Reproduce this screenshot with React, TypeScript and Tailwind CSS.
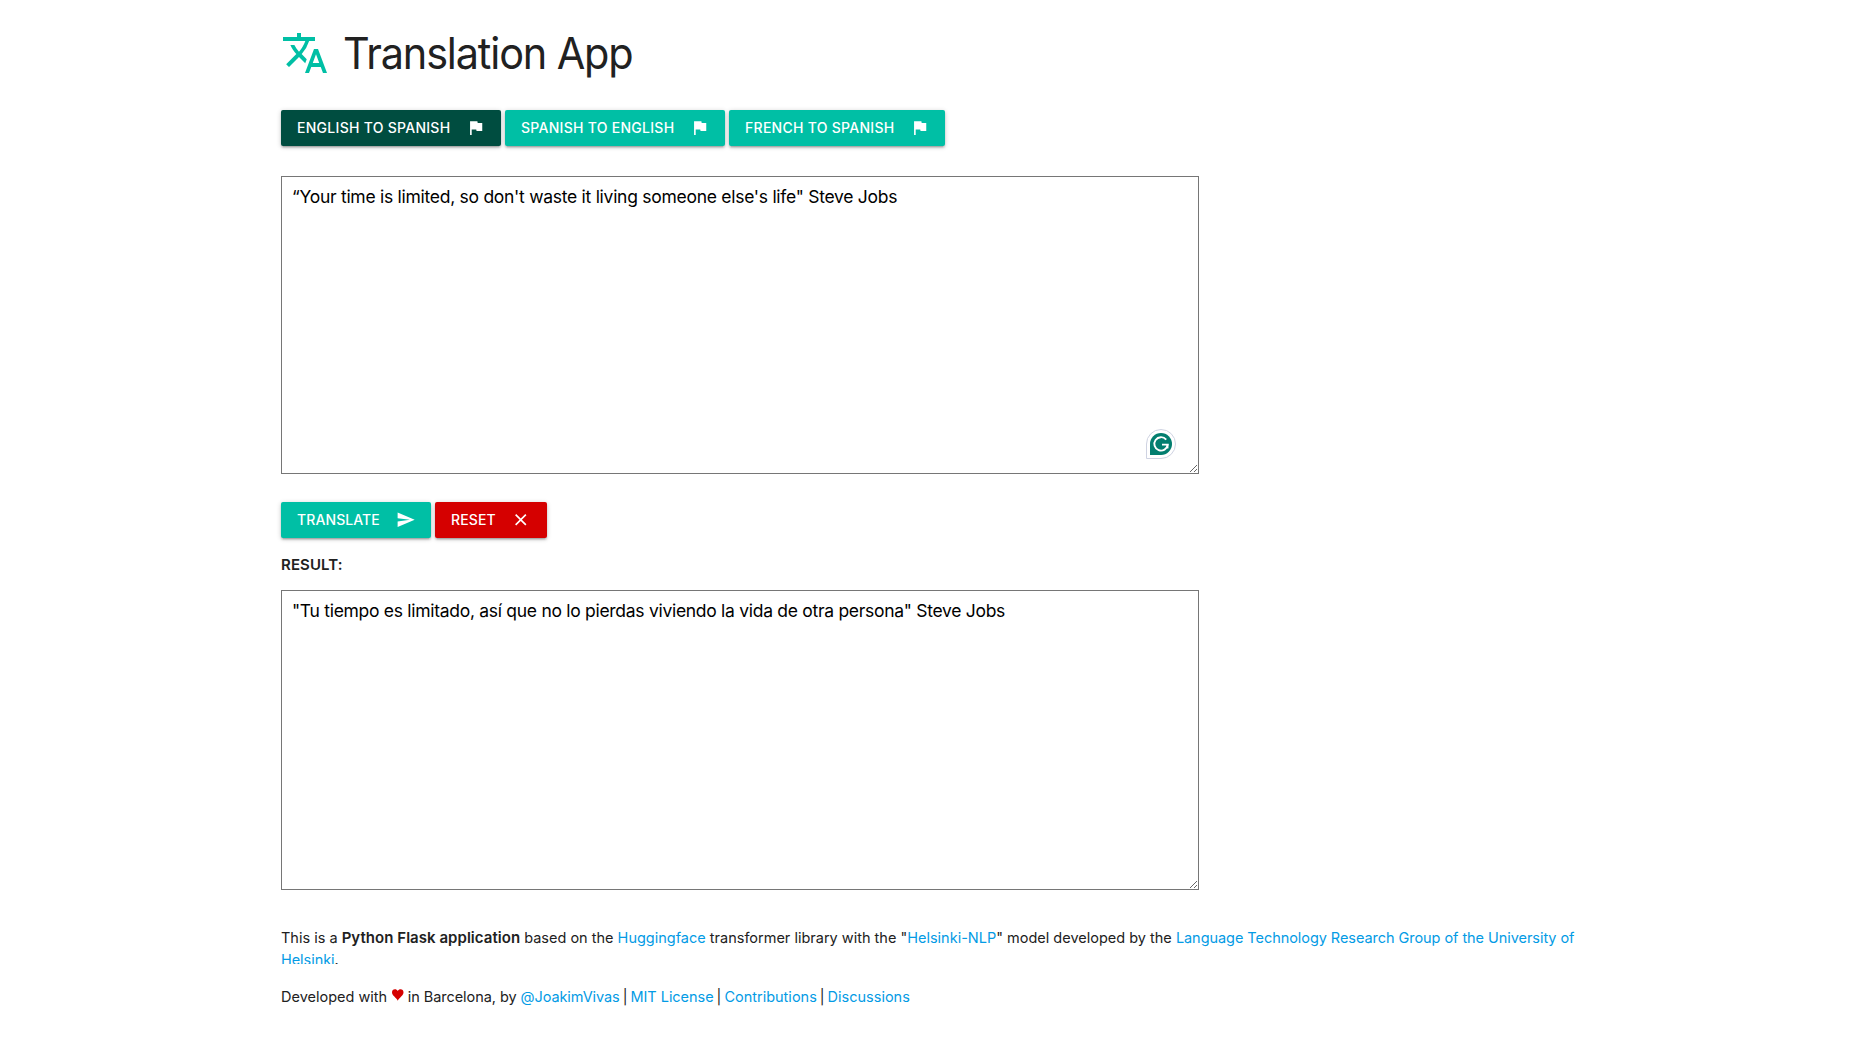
import type { ReactNode } from 'react';
import { MdClose, MdFlag, MdSend, MdTranslate } from 'react-icons/md';

const shadow = 'shadow-[0_2px_2px_0_rgba(0,0,0,0.14),0_3px_1px_-2px_rgba(0,0,0,0.12),0_1px_5px_0_rgba(0,0,0,0.2)]';

function Button({ className, icon, children }: { className: string; icon: ReactNode; children: string }) {
  return (
    <button
      className={`flex h-9 shrink-0 items-center justify-between whitespace-nowrap rounded-[2px] px-4 text-[14px] font-medium uppercase leading-9 text-white ${shadow} ${className}`}
    >
      <span>{children}</span>
      {icon}
    </button>
  );
}

function Link({ className = '', children }: { className?: string; children: ReactNode }) {
  return (
    <a href="#" className={`text-[#039be5] ${className}`}>
      {children}
    </a>
  );
}

function Bar() {
  return <span className="-mx-[1.1px]">|</span>;
}

function GrammarBadge() {
  return (
    <div className="absolute right-[23px] top-[253px] flex size-[30px] items-center justify-center rounded-full rounded-bl-none border border-[#cfd3e2] bg-white">
      <div className="flex size-[22px] items-center justify-center rounded-full rounded-bl-none bg-[#027e6f]">
        <svg viewBox="0 0 22 22" className="size-[22px]" fill="none" stroke="white" strokeWidth="1.9">
          <path d="M16.2 6.6A6.7 6.7 0 1 0 17.7 11.6H12" />
          <path d="M17.7 11.2V15.4" strokeWidth="1.5" />
        </svg>
      </div>
    </div>
  );
}

const area =
  'block w-[918px] resize border border-[#767676] bg-white pl-[10px] pr-2 pt-[7px] text-[17.5px] leading-[25px] text-black outline-none';

export default function App() {
  return (
    <main className="h-[1038px] overflow-hidden bg-white pl-[281px] font-['Inter',sans-serif] text-[14.5px] leading-[22px] text-[#212121]">
      <div className="flex w-[1311px] flex-col">
        <header className="mt-[29px] flex h-12 items-center gap-[14px]">
          <MdTranslate className="size-12 text-[#00bfa5]" />
          <h1 className="origin-left scale-x-[0.952] whitespace-nowrap text-[43.5px] leading-[48px] tracking-[-1.2px]">
            Translation App
          </h1>
        </header>

        <div className="mt-[33px] flex gap-1">
          <Button className="w-[220px] bg-[#004d40] tracking-[0.28px]" icon={<MdFlag className="size-[19.5px]" />}>
            English to Spanish
          </Button>
          <Button className="w-[220px] bg-[#00bfa5] tracking-[0.28px]" icon={<MdFlag className="size-[19.5px]" />}>
            Spanish to English
          </Button>
          <Button className="w-[216px] bg-[#00bfa5] tracking-[0.28px]" icon={<MdFlag className="size-[19.5px]" />}>
            French to Spanish
          </Button>
        </div>

        <div className="relative mt-[30px] w-[918px]">
          <textarea
            spellCheck={false}
            className={`h-[298px] tracking-[-0.275px] ${area}`}
            defaultValue={'“Your time is limited, so don\'t waste it living someone else\'s life" Steve Jobs'}
          />
          <GrammarBadge />
        </div>

        <div className="mt-[28px] flex gap-1">
          <Button className="w-[150px] bg-[#00bfa5] tracking-[0.1px]" icon={<MdSend className="size-[19.5px]" />}>
            Translate
          </Button>
          <Button className="w-[112px] bg-[#d50000] tracking-[0.15px]" icon={<MdClose className="mr-px size-[19.5px]" />}>
            Reset
          </Button>
        </div>

        <h2 className="mt-4 text-[15px] font-semibold leading-[22px] tracking-[0.1px]">RESULT:</h2>

        <textarea
          spellCheck={false}
          className={`mt-[14px] h-[300px] tracking-[-0.29px] ${area}`}
          defaultValue={'"Tu tiempo es limitado, así que no lo pierdas viviendo la vida de otra persona" Steve Jobs'}
        />

        <p className="mt-[37px] h-[37px] overflow-hidden">
          This is a <b className="text-[15px] font-semibold tracking-[0.04px]">Python Flask application</b> based on the{' '}
          <Link>Huggingface</Link> transformer library with the "<Link>Helsinki-NLP</Link>" model developed by the{' '}
          <Link className="tracking-[-0.055px]">
            Language Technology Research Group of the University of Helsinki
          </Link>
          .
        </p>

        <p className="mt-[22px] whitespace-nowrap">
          Developed with{' '}
          <svg viewBox="0 0 12 12" className="ml-px inline-block h-3 w-[11.5px] align-[1px]" fill="#d50000">
            <path d="M6 12C5.3 10.4 3.7 9.1 2.2 7.4 1 6.1 0 4.9 0 3.1 0 1.3 1.3 0 3 0c1.300 0 2.400.7 3 1.900C6.600.7 7.700 0 9 0c1.700 0 3 1.300 3 3.100 0 1.800-1 3-2.200 4.300C8.300 9.100 6.700 10.400 6 12z" />
          </svg>{' '}
          <span className="tracking-[-0.06px]">in Barcelona, by </span>
          <Link className="tracking-[-0.08px]">@JoakimVivas</Link> <Bar />{' '}
          <Link className="tracking-[-0.04px]">MIT License</Link> <Bar /> <Link>Contributions</Link> <Bar />{' '}
          <Link>Discussions</Link>
        </p>
      </div>
    </main>
  );
}
